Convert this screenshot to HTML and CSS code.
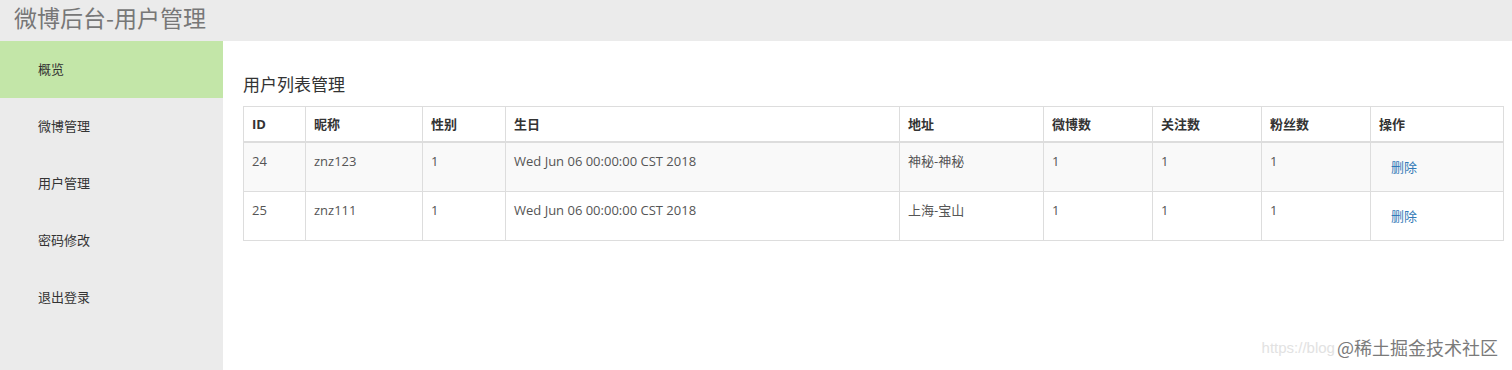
FILE: index.html
```html
<!DOCTYPE html>
<html lang="zh">
<head>
<meta charset="utf-8">
<title>微博后台-用户管理</title>
<link rel="stylesheet" href="styles.css">
</head>
<body>
<header class="topbar">微博后台-用户管理</header>
<div class="layout">
  <nav class="sidebar">
    <a class="nav-item active">概览</a>
    <a class="nav-item">微博管理</a>
    <a class="nav-item">用户管理</a>
    <a class="nav-item">密码修改</a>
    <a class="nav-item">退出登录</a>
  </nav>
  <main class="main">
    <h3 class="page-title">用户列表管理</h3>
    <table class="table">
      <colgroup>
        <col style="width:62px"><col style="width:117px"><col style="width:83px"><col style="width:394px"><col style="width:144px"><col style="width:109px"><col style="width:109px"><col style="width:109px"><col style="width:133px">
      </colgroup>
      <thead>
        <tr><th>ID</th><th>昵称</th><th>性别</th><th>生日</th><th>地址</th><th>微博数</th><th>关注数</th><th>粉丝数</th><th>操作</th></tr>
      </thead>
      <tbody>
        <tr class="odd"><td>24</td><td>znz123</td><td>1</td><td>Wed Jun 06 00:00:00 CST 2018</td><td>神秘-神秘</td><td>1</td><td>1</td><td>1</td><td><a class="btn-link">删除</a></td></tr>
        <tr><td>25</td><td>znz111</td><td>1</td><td>Wed Jun 06 00:00:00 CST 2018</td><td>上海-宝山</td><td>1</td><td>1</td><td>1</td><td><a class="btn-link">删除</a></td></tr>
      </tbody>
    </table>
  </main>
</div>
<div class="watermark"><span class="wm-url">https://blog</span><span class="wm-main">@稀土掘金技术社区</span></div>
</body>
</html>
```
FILE: styles.css
```css
html, body {
  margin: 0;
  padding: 0;
  height: 370px;
  overflow: hidden;
  background: #fff;
  font-family: "Open Sans", "Noto Sans CJK SC", sans-serif;
  font-size: 13px;
  color: #555;
}
.topbar {
  height: 41px;
  box-sizing: border-box;
  background: #ebebeb;
  color: #777;
  font-family: "Noto Sans CJK SC", sans-serif;
  font-size: 23px;
  line-height: 34px;
  padding-left: 14px;
}
.layout {
  display: flex;
  height: 329px;
}
.sidebar {
  width: 223px;
  flex: none;
  background: #ebebeb;
  display: flex;
  flex-direction: column;
}
.nav-item {
  display: block;
  height: 57px;
  line-height: 56px;
  padding-left: 38px;
  color: #333;
  font-family: "Noto Sans CJK SC", sans-serif;
  font-size: 13px;
}
.nav-item.active {
  background: #c3e6a8;
}
.main {
  flex: 1;
  padding: 31px 9px 0 20px;
}
.page-title {
  margin: 0 0 10px;
  font-family: "Noto Sans CJK SC", sans-serif;
  font-weight: normal;
  font-size: 17px;
  line-height: 24px;
  color: #333;
}
.table {
  width: 1260px;
  border-collapse: collapse;
  table-layout: fixed;
  border: 1px solid #ddd;
}
.table th, .table td {
  border: 1px solid #ddd;
  padding: 8px;
  line-height: 20px;
  text-align: left;
  vertical-align: top;
}
.table th {
  color: #333;
  font-weight: bold;
  border-bottom-width: 2px;
  padding-top: 7px;
  padding-bottom: 7px;
}
.table tr.odd td {
  background: #f9f9f9;
}
.btn-link {
  display: inline-block;
  padding: 6px 12px;
  line-height: 20px;
  color: #337ab7;
  font-family: "Noto Sans CJK SC", sans-serif;
}
.watermark {
  position: absolute;
  right: 14px;
  bottom: 10px;
  height: 26px;
  display: flex;
  align-items: center;
  gap: 2px;
}
.wm-url {
  white-space: nowrap;
  color: #e2e2e2;
  font-family: "Liberation Sans", sans-serif;
  font-size: 15px;
}
.wm-main {
  color: #7a7a7a;
  font-family: "Noto Sans CJK SC", sans-serif;
  font-size: 18px;
  line-height: 26px;
}
```
